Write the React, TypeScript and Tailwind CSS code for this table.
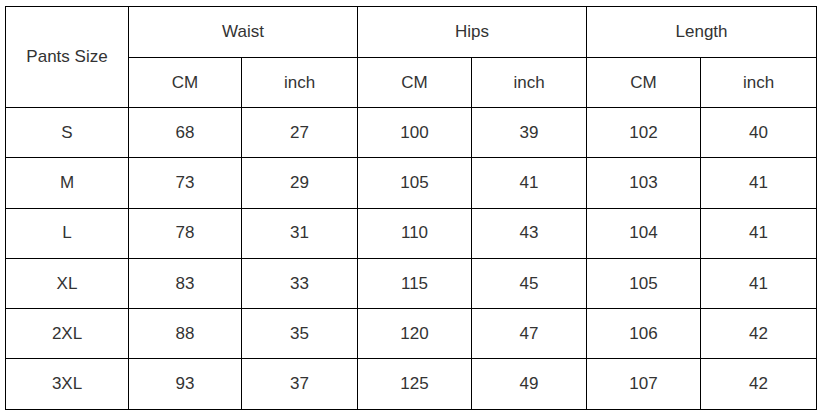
const rows = [
  ["S", "68", "27", "100", "39", "102", "40"],
  ["M", "73", "29", "105", "41", "103", "41"],
  ["L", "78", "31", "110", "43", "104", "41"],
  ["XL", "83", "33", "115", "45", "105", "41"],
  ["2XL", "88", "35", "120", "47", "106", "42"],
  ["3XL", "93", "37", "125", "49", "107", "42"],
];

const cell = "border border-black text-center align-middle font-normal";

export default function App() {
  return (
    <div className="w-[820px] h-[416px] bg-white pt-[6px] pl-[5px]">
      <table
        className="table-fixed border-collapse w-[811px] text-[17px] text-[#333]"
        style={{ fontFamily: '"Liberation Sans", Arial, sans-serif' }}
      >
        <colgroup>
          <col className="w-[123px]" />
          <col className="w-[113px]" />
          <col className="w-[116px]" />
          <col className="w-[114px]" />
          <col className="w-[115px]" />
          <col className="w-[114px]" />
          <col className="w-[116px]" />
        </colgroup>
        <thead>
          <tr className="h-[51px]">
            <th rowSpan={2} className={cell}>
              Pants Size
            </th>
            <th colSpan={2} className={cell}>
              Waist
            </th>
            <th colSpan={2} className={cell}>
              Hips
            </th>
            <th colSpan={2} className={cell}>
              Length
            </th>
          </tr>
          <tr className="h-[50px]">
            <th className={cell}>CM</th>
            <th className={cell}>inch</th>
            <th className={cell}>CM</th>
            <th className={cell}>inch</th>
            <th className={cell}>CM</th>
            <th className={cell}>inch</th>
          </tr>
        </thead>
        <tbody>
          {rows.map((r) => (
            <tr key={r[0]} className="h-[50.3px]">
              {r.map((v, i) => (
                <td key={i} className={cell}>
                  {v}
                </td>
              ))}
            </tr>
          ))}
        </tbody>
      </table>
    </div>
  );
}
